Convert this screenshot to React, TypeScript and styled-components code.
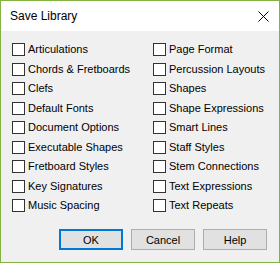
import React from "react";
import styled, { createGlobalStyle } from "styled-components";

const Global = createGlobalStyle`
  html, body { margin: 0; padding: 0; background: #ffffff; }
  body { width: 280px; height: 263px; overflow: hidden; }
`;

const Window = styled.div`
  box-sizing: border-box;
  width: 280px;
  height: 263px;
  border: 1px solid #83b242;
  background: #f0f0f0;
  display: flex;
  flex-direction: column;
  font-family: "Liberation Sans", Arial, sans-serif;
  color: #000;
`;

const TitleBar = styled.div`
  height: 30px;
  background: #ffffff;
  display: flex;
  align-items: center;
  justify-content: space-between;
  padding: 0 10px 0 9px;
  flex-shrink: 0;
`;

const Title = styled.span`
  font-family: "Liberation Sans", Arial, sans-serif;
  font-size: 12px;
  padding-bottom: 1px;
`;

const CloseIcon = styled.svg`
  width: 11px;
  height: 11px;
  display: block;
`;

const Body = styled.div`
  flex: 1;
  display: flex;
  flex-direction: column;
  padding: 12px 12px 12px 11px;
`;

const Grid = styled.div`
  display: grid;
  grid-template-columns: 141px 1fr;
  grid-auto-rows: 19.5px;
`;

const Item = styled.label`
  display: flex;
  align-items: flex-start;
  gap: 3px;
  font-size: 11px;
  line-height: 13px;
  white-space: nowrap;
`;

const Box = styled.span`
  box-sizing: border-box;
  width: 13px;
  height: 13px;
  border: 1px solid #333333;
  background: #ffffff;
  flex-shrink: 0;
`;

const Buttons = styled.div`
  margin-top: auto;
  display: flex;
  justify-content: flex-end;
  gap: 8px;
`;

const Button = styled.button<{ $primary?: boolean }>`
  box-sizing: border-box;
  width: 64px;
  height: 21px;
  background: #e1e1e1;
  border: ${(p) => (p.$primary ? "2px solid #0078d7" : "1px solid #adadad")};
  font-family: "Liberation Sans", Arial, sans-serif;
  font-size: 11px;
  color: #000;
  padding: 0;
  display: flex;
  align-items: center;
  justify-content: center;
`;

const left = [
  "Articulations",
  "Chords & Fretboards",
  "Clefs",
  "Default Fonts",
  "Document Options",
  "Executable Shapes",
  "Fretboard Styles",
  "Key Signatures",
  "Music Spacing",
];
const right = [
  "Page Format",
  "Percussion Layouts",
  "Shapes",
  "Shape Expressions",
  "Smart Lines",
  "Staff Styles",
  "Stem Connections",
  "Text Expressions",
  "Text Repeats",
];

export default function App() {
  const items: string[] = [];
  for (let i = 0; i < left.length; i++) {
    items.push(left[i], right[i]);
  }
  return (
    <>
      <Global />
      <Window>
        <TitleBar>
          <Title>Save Library</Title>
          <CloseIcon viewBox="0 0 11 11">
            <path d="M0.5 0.5 L10.5 10.5 M10.5 0.5 L0.5 10.5" stroke="#000" strokeWidth="1" />
          </CloseIcon>
        </TitleBar>
        <Body>
          <Grid>
            {items.map((t) => (
              <Item key={t}>
                <Box />
                {t}
              </Item>
            ))}
          </Grid>
          <Buttons>
            <Button $primary>OK</Button>
            <Button>Cancel</Button>
            <Button>Help</Button>
          </Buttons>
        </Body>
      </Window>
    </>
  );
}
